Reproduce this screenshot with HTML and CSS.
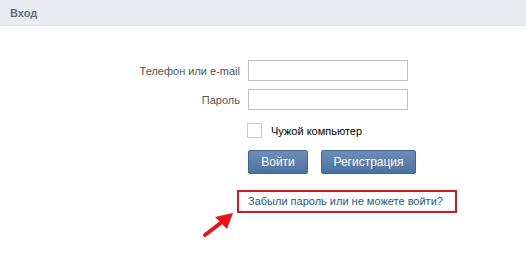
FILE: index.html
```html
<!DOCTYPE html>
<html lang="ru">
<head>
  <meta charset="UTF-8">
  <title>Вход</title>
  <link rel="stylesheet" href="styles.css">
</head>
<body>
  <div class="page-head">Вход</div>

  <form class="login-form">
    <label class="field-label" for="login">Телефон или e-mail</label>
    <input class="field" id="login" type="text">

    <label class="field-label" for="pass">Пароль</label>
    <input class="field" id="pass" type="password">

    <div></div>
    <label class="check-row">
      <span class="check-box"></span>
      Чужой компьютер
    </label>

    <div></div>
    <div class="button-row">
      <button class="btn btn-login" type="button">Войти</button>
      <button class="btn btn-reg" type="button">Регистрация</button>
    </div>
  </form>

  <div class="forgot">
    <svg class="arrow" width="34" height="28" viewBox="0 0 34 28">
      <line x1="3" y1="25" x2="20" y2="12" stroke="#e8141c" stroke-width="4" stroke-linecap="round"/>
      <polygon points="31,3 13,7 25,19" fill="#e8141c"/>
    </svg>
    <a class="forgot-link" href="#">Забыли пароль или не можете войти?</a>
  </div>
</body>
</html>
```

FILE: styles.css
```css
body {
  margin: 0;
  font-family: 'Liberation Sans', Arial, sans-serif;
  font-size: 11px;
  color: #000;
  background: #fff;
}

.page-head {
  height: 25px;
  line-height: 26px;
  padding-left: 10px;
  background: #e9edf1;
  border-bottom: 1px solid #dde2e8;
  color: #596d84;
  font-weight: bold;
}

.login-form {
  display: grid;
  grid-template-columns: 240px 1fr;
  column-gap: 8px;
  row-gap: 8px;
  margin-top: 34px;
  align-items: center;
}

.field-label {
  text-align: right;
  color: #555;
}

.field {
  box-sizing: border-box;
  width: 160px;
  height: 21px;
  margin: 0;
  border: 1px solid #c0c0c0;
  background: #fff;
}

.check-row {
  display: flex;
  align-items: center;
  gap: 9px;
  margin-top: 5px;
  margin-left: -1px;
  color: #000;
}

.check-box {
  box-sizing: border-box;
  width: 15px;
  height: 15px;
  border: 1px solid #c5cbd2;
  background: #fff;
}

.button-row {
  display: flex;
  gap: 13px;
  margin-top: 4px;
}

.btn {
  flex-shrink: 0;
  height: 24px;
  padding: 0;
  border: 1px solid #3f6592;
  border-radius: 2px;
  background: linear-gradient(#6d8fb8, #4c71a0);
  color: #fff;
  font-family: inherit;
  font-size: 12px;
}

.btn-login {
  width: 60px;
}

.btn-reg {
  width: 95px;
}

.forgot {
  display: flex;
  align-items: flex-start;
  margin-top: 16px;
  padding-left: 202px;
}

.arrow {
  flex-shrink: 0;
  margin-top: 20px;
  margin-right: 1px;
}

.forgot-link {
  display: block;
  box-sizing: border-box;
  width: 220px;
  height: 23px;
  line-height: 19px;
  padding-left: 9px;
  border: 2px solid #cf1b23;
  color: #2b587a;
  text-decoration: none;
}
```
